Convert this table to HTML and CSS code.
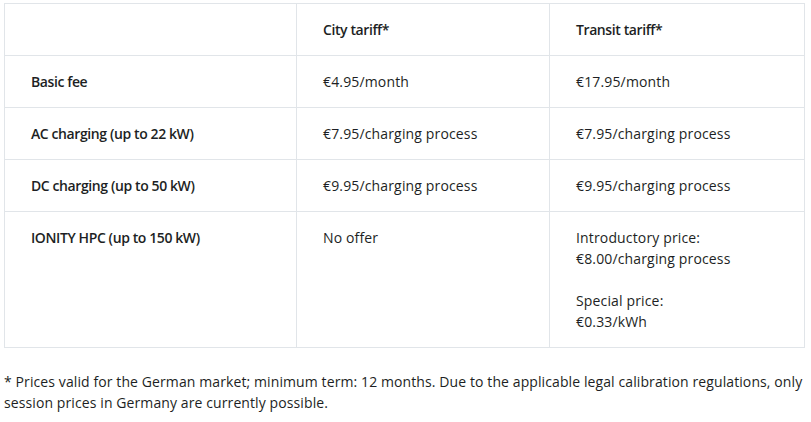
FILE: index.html
```html
<!DOCTYPE html>
<html lang="en">
<head>
<meta charset="utf-8">
<title>Tariffs</title>
<link rel="stylesheet" href="styles.css">
</head>
<body>
<div class="page">
  <table class="tariffs">
    <colgroup>
      <col class="c1"><col class="c2"><col class="c3">
    </colgroup>
    <thead>
      <tr>
        <th></th>
        <th>City tariff*</th>
        <th>Transit tariff*</th>
      </tr>
    </thead>
    <tbody>
      <tr>
        <th>Basic fee</th>
        <td>€4.95/month</td>
        <td>€17.95/month</td>
      </tr>
      <tr>
        <th>AC charging (up to 22 kW)</th>
        <td>€7.95/charging process</td>
        <td>€7.95/charging process</td>
      </tr>
      <tr>
        <th>DC charging (up to 50 kW)</th>
        <td>€9.95/charging process</td>
        <td>€9.95/charging process</td>
      </tr>
      <tr>
        <th>IONITY HPC (up to 150 kW)</th>
        <td>No offer</td>
        <td>Introductory price:<br>€8.00/charging process<br><br>Special price:<br>€0.33/kWh</td>
      </tr>
    </tbody>
  </table>
  <p class="note">* Prices valid for the German market; minimum term: 12 months. Due to the applicable legal calibration regulations, only session prices in Germany are currently possible.</p>
</div>
</body>
</html>
```
FILE: styles.css
```css
html, body {
  margin: 0;
  padding: 0;
  background: #ffffff;
}
body {
  font-family: "Open Sans", "DejaVu Sans", sans-serif;
  font-size: 14px;
  line-height: 21px;
  color: #1d1f24;
  letter-spacing: 0.15px;
}
.page {
  padding: 3px 4px 0 4px;
  width: 803px;
}
.tariffs {
  border-collapse: collapse;
  width: 800px;
  table-layout: fixed;
}
.c1 { width: 292px; }
.c2 { width: 253px; }
.c3 { width: 255px; }
.tariffs th,
.tariffs td {
  border: 1px solid #e1e5e9;
  padding: 15px 26px;
  text-align: left;
  vertical-align: top;
  font-weight: 400;
}
.tariffs th {
  font-weight: 600;
  letter-spacing: -0.4px;
}
.note {
  margin: 23px -4px 0 0;
  letter-spacing: 0.1px;
}
```
